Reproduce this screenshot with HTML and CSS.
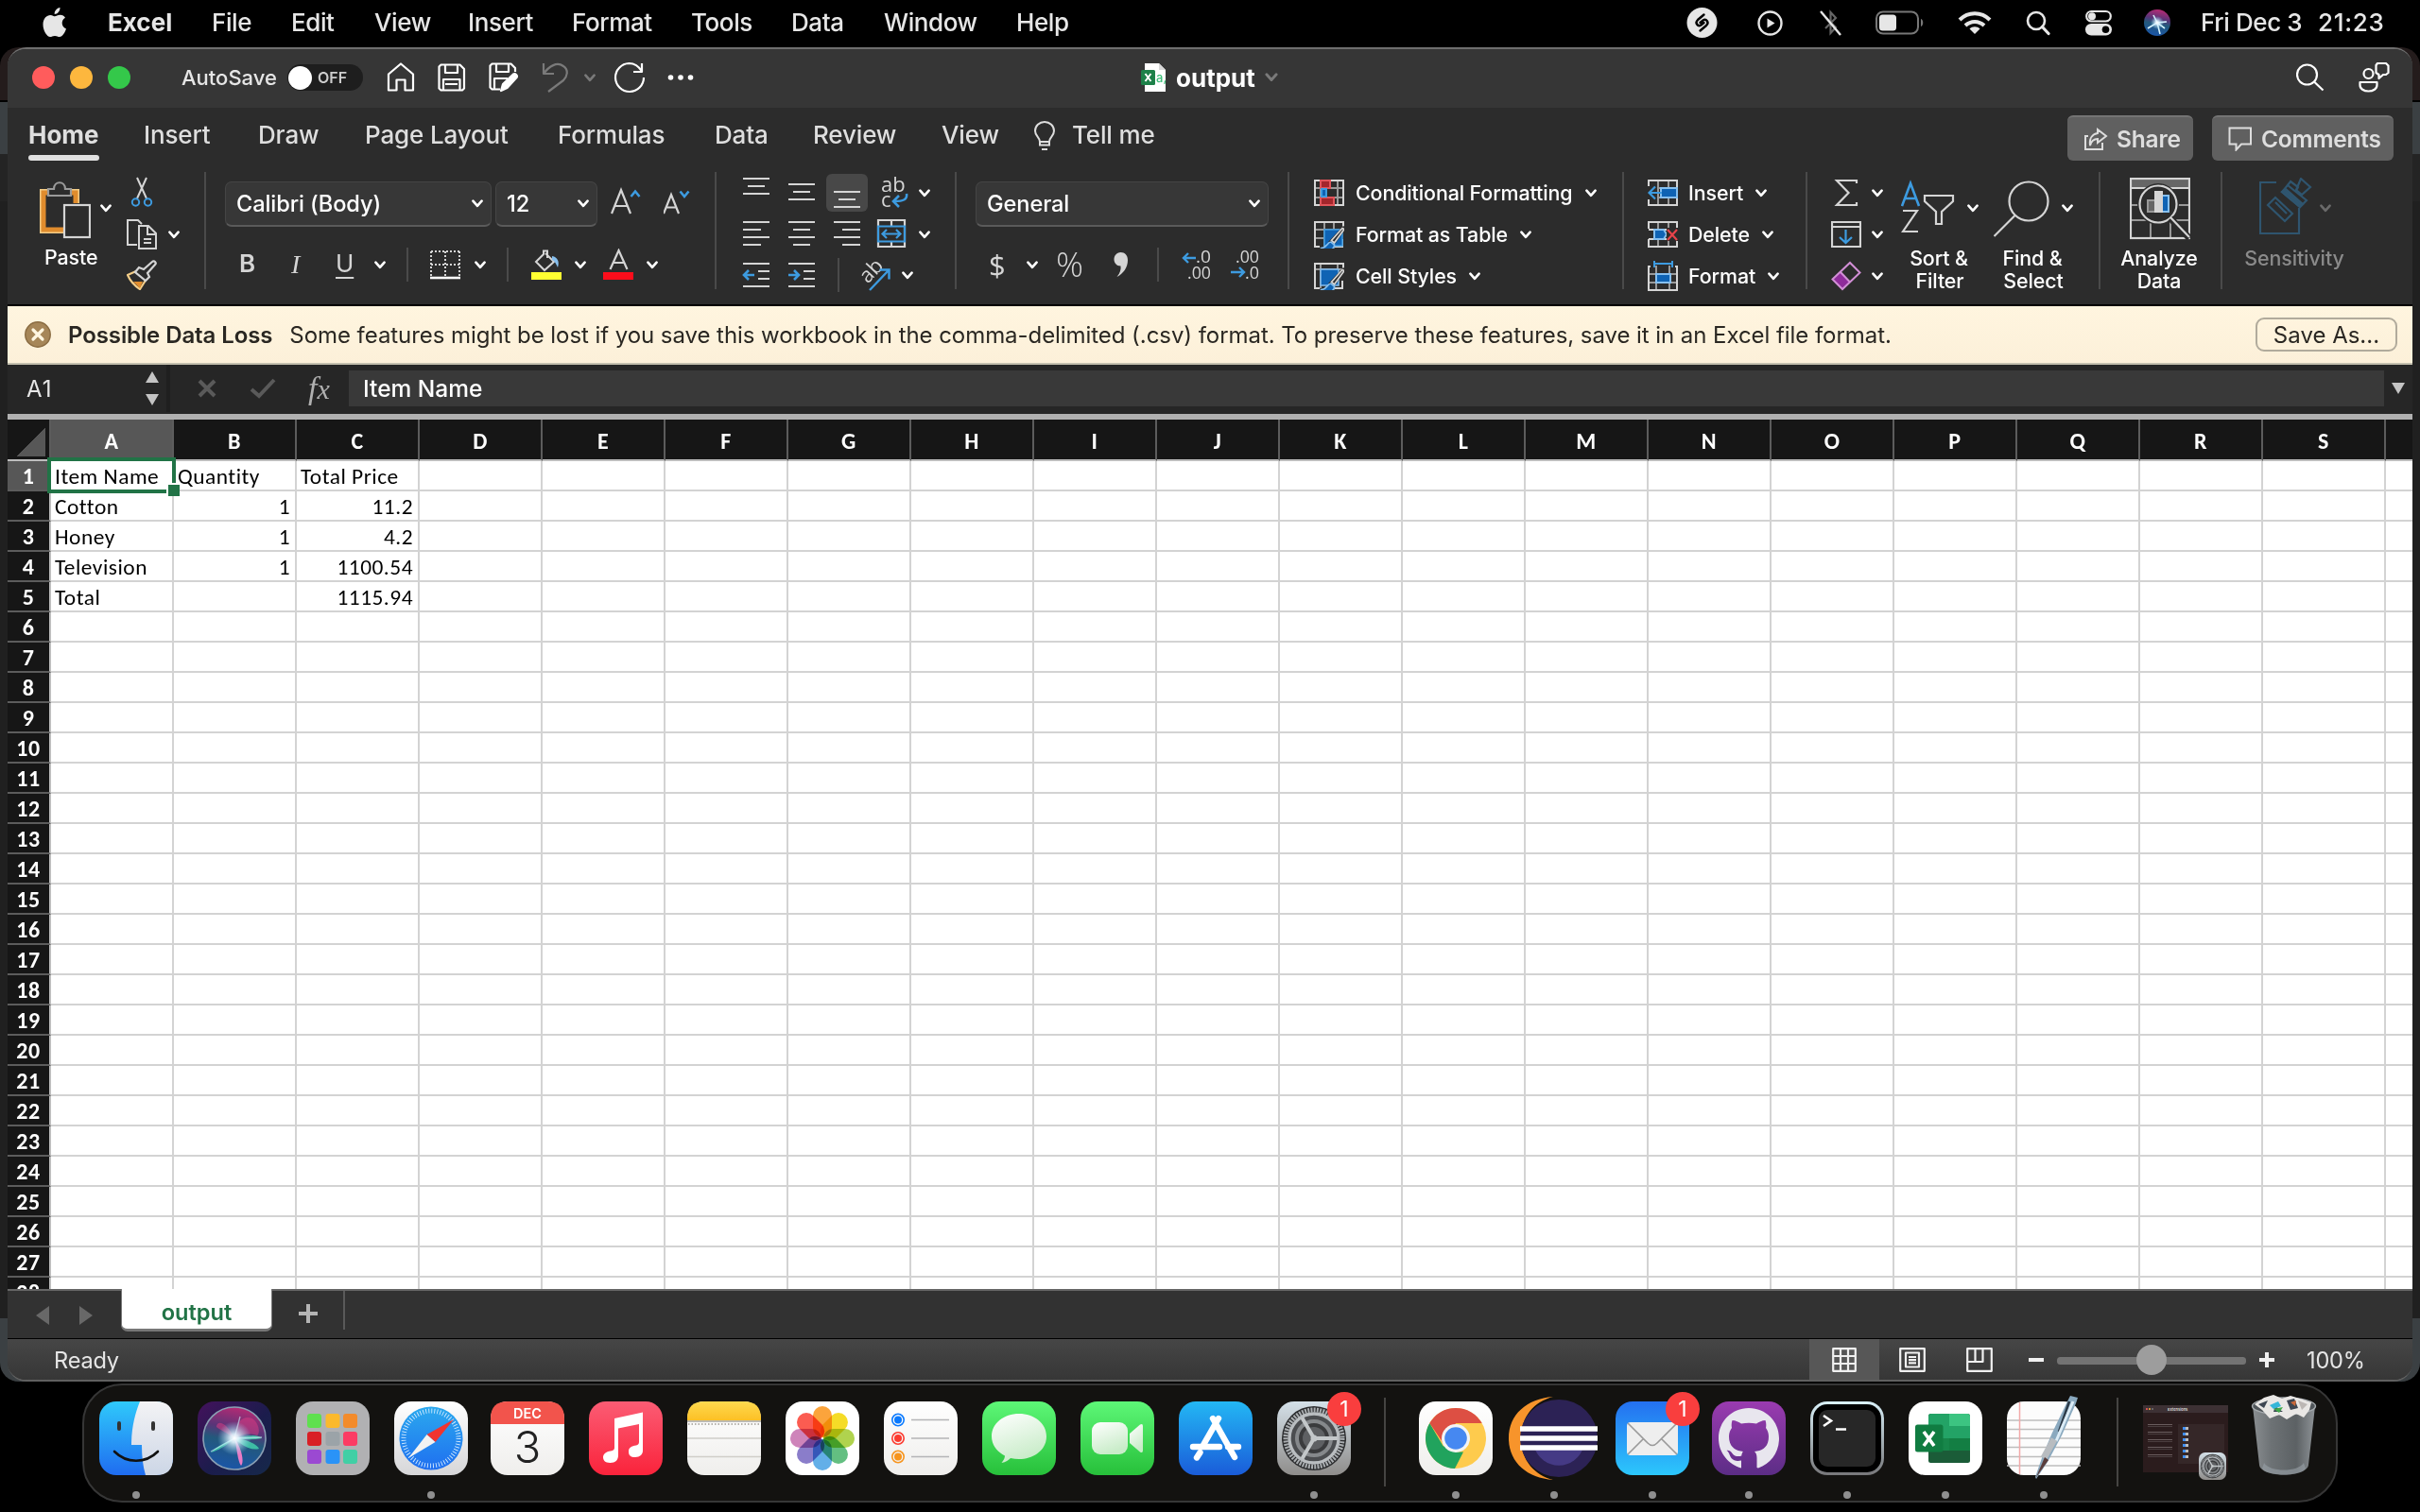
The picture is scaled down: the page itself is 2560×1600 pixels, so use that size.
FILE: index.html
```html
<!DOCTYPE html>
<html lang="en">
<head>
<meta charset="utf-8">
<title>output</title>
<link rel="stylesheet" href="styles.css">
</head>
<body>
<svg class="defs" width="0" height="0">
  <defs>
    <symbol id="chev" viewBox="0 0 12 9"><path d="M1.4 1.6 6 6.8 10.6 1.6" fill="none" stroke="currentColor" stroke-width="2.6" stroke-linecap="round" stroke-linejoin="round"/></symbol>
    <symbol id="gear" viewBox="0 0 78 78">
      <rect width="78" height="78" rx="18" fill="url(#gGear)"/>
      <circle cx="39" cy="39" r="34" fill="#2b2c2e"/>
      <circle cx="39" cy="39" r="30" fill="none" stroke="#a9adb0" stroke-width="5" stroke-dasharray="2 1.2"/>
      <circle cx="39" cy="39" r="26" fill="#4b4d50" stroke="#b9bdc0" stroke-width="3.4"/>
      <circle cx="39" cy="39" r="18" fill="#3a3b3d" stroke="#85888b" stroke-width="4"/>
      <circle cx="39" cy="39" r="12" fill="#5e6063"/>
      <path d="M39 39H64M39 39 26.500 17.500M39 39 26.500 60.500" stroke="#c3c7c9" stroke-width="4"/>
      <circle cx="39" cy="39" r="3.500" fill="#c3c7c9"/>
    </symbol>
    <symbol id="brush" viewBox="0 0 26 26"><path d="M25 0 28 2 17 18 11 21 9 17Z" fill="#2c2c2c"/><path d="M24 2.500 26 3.500 15.500 18 12.500 15.500Z" fill="#2c2c2c" stroke="#d5d5d5" stroke-width="1.700"/><path d="M12 17C8 17 8 23 2 23.500 7 28 16 26 15.500 20Z" fill="#0f63b4" stroke="#86bfee" stroke-width="1.700"/></symbol>
    <linearGradient id="gGear" x2="0" y2="1"><stop stop-color="#d4e0e8"/><stop offset="1" stop-color="#8f8d8b"/></linearGradient>
    <linearGradient id="gFinder" x2="0" y2="1"><stop stop-color="#2fc9fb"/><stop offset="1" stop-color="#1f6cf0"/></linearGradient>
    <linearGradient id="gFace" x2="0" y2="1"><stop stop-color="#f3f3f5"/><stop offset="1" stop-color="#ccd6e6"/></linearGradient>
    <radialGradient id="gGlow"><stop stop-color="#fff"/><stop offset=".25" stop-color="#e4f6ff" stop-opacity=".9"/><stop offset="1" stop-color="#8fd0f0" stop-opacity="0"/></radialGradient>
    <linearGradient id="gSiriBg" x2="1" y2="1"><stop stop-color="#43125c"/><stop offset=".55" stop-color="#1b1c4c"/><stop offset="1" stop-color="#16294a"/></linearGradient>
    <linearGradient id="gOrb" x1=".6" x2=".4" y2="1"><stop stop-color="#b82a74"/><stop offset=".35" stop-color="#5a3478"/><stop offset=".55" stop-color="#23597c"/><stop offset="1" stop-color="#1a55a8"/></linearGradient>
    <linearGradient id="gSafari" x2="0" y2="1"><stop stop-color="#fff"/><stop offset="1" stop-color="#d6d6d8"/></linearGradient>
    <linearGradient id="gBlue" x2="0" y2="1"><stop stop-color="#2ba9ee"/><stop offset="1" stop-color="#1f6ff0"/></linearGradient>
    <linearGradient id="gMusic" x2="0" y2="1"><stop stop-color="#fb5c74"/><stop offset="1" stop-color="#fa233b"/></linearGradient>
    <linearGradient id="gGreen" x2="0" y2="1"><stop stop-color="#5df777"/><stop offset="1" stop-color="#27c03a"/></linearGradient>
    <linearGradient id="gWhite" x2="0" y2="1"><stop stop-color="#fff"/><stop offset="1" stop-color="#efeeec"/></linearGradient>
    <linearGradient id="gBubble" x2=".4" y2="1"><stop stop-color="#fff"/><stop offset="1" stop-color="#c9ecc9"/></linearGradient>
    <linearGradient id="gStore" x2="0" y2="1"><stop stop-color="#23b7f4"/><stop offset="1" stop-color="#1a5cd9"/></linearGradient>
    <linearGradient id="gMail" x2="0" y2="1"><stop stop-color="#2470f0"/><stop offset="1" stop-color="#2cc7fc"/></linearGradient>
    <linearGradient id="gHub" x2="0" y2="1"><stop stop-color="#9a3bb0"/><stop offset="1" stop-color="#5c2d86"/></linearGradient>
    <linearGradient id="gTerm" x2="0" y2="1"><stop stop-color="#d8f0f8"/><stop offset="1" stop-color="#77777a"/></linearGradient>
    <linearGradient id="gBin" x2="1"><stop stop-color="#8a8e91"/><stop offset=".3" stop-color="#6d7275"/><stop offset=".7" stop-color="#5c6164"/><stop offset="1" stop-color="#8f9498"/></linearGradient>
    <linearGradient id="gYellow" x2="0" y2="1"><stop stop-color="#fed94f"/><stop offset="1" stop-color="#fcc025"/></linearGradient>
  </defs>
</svg>

<header class="menubar">
  <svg width="28" height="34" viewBox="0 0 28 34" fill="#e6e6e6"><path d="M19.500 1C19.700 4.500 17 8 13.700 8 13.300 4.800 16.300 1.300 19.500 1ZM14 10.300C15.300 10.300 17 8.700 19.600 8.700 22 8.700 24 10 25 11.700 20 14.500 21 21.500 26 23.500 25 27 22 32 19 32 17.200 32 16.400 30.900 14 30.900 11.600 30.900 10.700 32 9 32 5.800 32 1.500 25.500 1.500 19 1.500 12.500 5.500 8.900 9.300 8.900 11.500 8.900 13 10.300 14 10.300Z"/></svg>
  <b>Excel</b><span>File</span><span>Edit</span><span>View</span><span>Insert</span><span>Format</span><span>Tools</span><span>Data</span><span>Window</span><span>Help</span>
  <svg width="33" height="34" viewBox="0 0 33 34"><circle cx="16.500" cy="17" r="16" fill="#e6e6e6"/><path d="M18.500 8.500 12 14C8.500 17.500 12 21.500 15.500 19.500L18.500 17M14.500 25.500 21 20C24.500 16.500 21 12.500 17.500 14.500L14.500 17" fill="none" stroke="#000" stroke-width="2.400" stroke-linecap="round"/></svg>
  <svg width="28" height="28" viewBox="0 0 28 28"><circle cx="13.500" cy="14.500" r="12" fill="none" stroke="#e6e6e6" stroke-width="2.400"/><path d="M10.500 9.500V19.500L18.500 14.500Z" fill="#e6e6e6"/></svg>
  <svg width="24" height="30" viewBox="0 0 24 30"><path d="M6 9 17 20 11.500 26V4L17 10 6 21" fill="none" stroke="#666" stroke-width="2.200"/><path d="M1 3 22 28" stroke="#e6e6e6" stroke-width="2.400"/></svg>
  <svg width="52" height="26" viewBox="0 0 52 26"><rect x="1" y="1.500" width="44" height="23" rx="7" fill="none" stroke="#777" stroke-width="2"/><rect x="4" y="4.500" width="18" height="17" rx="3.500" fill="#e6e6e6"/><path d="M48 9C51 10 51 16 48 17Z" fill="#777"/></svg>
  <svg width="36" height="28" viewBox="0 0 36 28" fill="none" stroke="#e6e6e6" stroke-width="4"><path d="M2 11C11 2 25 2 34 11M8 17C14 11.500 22 11.500 28 17"/><path d="M18 26 12.500 20.500C15.500 17.500 20.500 17.500 23.500 20.500Z" fill="#e6e6e6" stroke="none"/></svg>
  <svg width="26" height="28" viewBox="0 0 26 28" fill="none" stroke="#e6e6e6" stroke-width="2.600"><circle cx="11" cy="12" r="9"/><path d="M17.500 18.500 24 25.500" stroke-width="3.200" stroke-linecap="round"/></svg>
  <svg width="28" height="28" viewBox="0 0 28 28"><rect x="1.200" y="2" width="25.600" height="10.500" rx="5.200" fill="none" stroke="#e6e6e6" stroke-width="2.200"/><circle cx="7" cy="7.200" r="4" fill="#e6e6e6"/><rect y="15" width="28" height="12.500" rx="6.200" fill="#e6e6e6"/><circle cx="21.500" cy="21.200" r="3.800" fill="#000"/></svg>
  <svg width="28" height="28" viewBox="0 0 28 28"><circle cx="14" cy="14" r="14" fill="url(#gOrb)"/><path d="M14 14 4 20M14 14 17 26M14 14 24 13M14 14 10 6M14 14 22 20" stroke="#d8f6ff" stroke-width="1.600"/><circle cx="14" cy="14" r="7" fill="url(#gGlow)"/></svg>
  <span>Fri Dec 3</span><span class="clock">21:23</span>
</header>

<main class="desktop">
<section class="window">
  <div class="titlebar">
    <div class="lights"><i></i><i></i><i></i></div>
    <span class="autosave">AutoSave</span>
    <div class="toggle"><i></i><span>OFF</span></div>
    <svg width="30" height="32" viewBox="0 0 30 32" class="ln"><path d="M2 12.500 15 1.500 28 12.500V29.500H19.500V18.500H10.500V29.500H2Z"/></svg>
    <svg width="30" height="30" viewBox="0 0 30 30" class="ln"><path d="M3.500 1.500H23.500L28 6V26.500L26 28.500H3.500L1.500 26.500V3.500ZM8 1.500V10H21V1.500M6 28.500V17H23.500V28.500M8 22H21"/></svg>
    <svg width="32" height="32" viewBox="0 0 32 32" class="ln"><path d="M12 28.500H3.500L1.500 26.500V3.500L3.500 1.500H23.500L28 6V10M8 1.500V10H21V1.500M6 28.500V17H20"/><path d="M13 30 15 23 26 12.500C28 11 31 14 29.500 16L19.500 27Z" fill="#fff"/></svg>
    <svg width="30" height="34" viewBox="0 0 30 34" class="ln dim"><path d="M2 2V13H13M2 13C8 5 16 0 23 5 29 9 27 16 23 20L7 32"/></svg>
    <svg class="chev dim"><use href="#chev"/></svg>
    <svg width="34" height="34" viewBox="0 0 34 34" class="ln"><path d="M30 2V11H21M30 10.500C26 4 21 2 16.500 2A15 15 0 1 0 32 17"/></svg>
    <svg width="28" height="8" viewBox="0 0 28 8" fill="#fff"><circle cx="3.500" cy="4" r="2.800"/><circle cx="14" cy="4" r="2.800"/><circle cx="24.500" cy="4" r="2.800"/></svg>
    <svg width="27" height="30" viewBox="0 0 27 30"><path d="M4 0H19L26 7V30H4Z" fill="#fff"/><path d="M19 0V7H26Z" fill="#d8d8d8"/><rect y="7" width="15" height="16" rx="1.500" fill="#1d8149"/><path d="M4.500 11 10.500 19M10.500 11 4.500 19" stroke="#fff" stroke-width="2"/><text x="16" y="20" font-size="13" fill="#3fbf7a">a,</text></svg>
    <b>output</b>
    <svg class="chev wide dim"><use href="#chev"/></svg>
    <svg width="30" height="30" viewBox="0 0 30 30" class="ln"><circle cx="11.500" cy="12" r="10.500"/><path d="M19 19.500 28.500 28.500"/></svg>
    <svg width="34" height="34" viewBox="0 0 34 34" class="ln"><circle cx="10.500" cy="13" r="5"/><path d="M1.500 22H19.500V25C19.500 29 15.500 31.500 10.500 31.500S1.500 29 1.500 25ZM20 2H29L31.500 4.500V12L29 14H26L21.500 18V14L18.500 12V4Z"/></svg>
  </div>

  <nav class="tabs">
    <b class="active">Home</b><span>Insert</span><span>Draw</span><span>Page Layout</span><span>Formulas</span><span>Data</span><span>Review</span><span>View</span>
    <svg width="22" height="32" viewBox="0 0 22 32" fill="none" stroke="#ddd" stroke-width="2"><path d="M6 22C6 17 1 16 1 10.500A10 9.500 0 0 1 21 10.500C21 16 16 17 16 22V25.500H6ZM6 22H16M8 30H14"/></svg>
    <span>Tell me</span>
    <button class="btn share"><svg width="26" height="26" viewBox="0 0 26 26" fill="none" stroke="#ddd" stroke-width="2"><path d="M5 10H2V24H20V17M15 3 24 10 15 17V13C10 13 8 16 7 20 6 13 9 8 15 7Z"/></svg>Share</button>
    <button class="btn comments"><svg width="26" height="26" viewBox="0 0 26 26" fill="none" stroke="#ddd" stroke-width="2"><path d="M1.500 1.500H24V18.500H14L8.500 24.500V18.500H1.500Z"/></svg>Comments</button>
  </nav>

  <div class="ribbon">
    <div class="group clipboard">
      <div class="paste">
        <svg width="54" height="62" viewBox="0 0 54 62"><path d="M26 54H1V9H41V23" fill="none" stroke="#f3cd88" stroke-width="2"/><path d="M26 51H4V12H38V23" fill="none" stroke="#e08c2d" stroke-width="5"/><path d="M9 8H15C15 -1 27 -1 27 8H33V15H9Z" fill="#2c2c2c" stroke="#9a9a9a" stroke-width="2.200"/><rect x="26" y="25" width="27" height="34" fill="#2c2c2c" stroke="#d5d5d5" stroke-width="2.200"/></svg>
        <svg class="chev"><use href="#chev"/></svg>
        <span>Paste</span>
      </div>
      <div class="clips">
        <svg width="32" height="36" viewBox="0 0 32 36" fill="none" stroke-width="2"><path d="M11 2 21 24M21 2 11 24" stroke="#d5d5d5"/><g stroke="#3d9be0"><circle cx="9.500" cy="28" r="3.700"/><circle cx="22.500" cy="28" r="3.700"/></g></svg><i></i>
        <svg width="34" height="34" viewBox="0 0 34 34" fill="none" stroke="#d5d5d5" stroke-width="2"><path d="M11 28H1V2H12L16 6M13 8H23L31 16V32H13ZM22 8V17H31M18 22H26M18 26H26"/></svg><svg class="chev"><use href="#chev"/></svg>
        <svg class="painter" width="32" height="32" viewBox="0 0 32 32" stroke-width="2.200"><path d="M1 16 12 11 21 20 14 31C8 27 4 23 1 16Z" fill="#2c2c2c" stroke="#f3cd88"/><path d="M7 23 17 23 14 30Z" fill="#e08c2d"/><path d="M9 13 13 8 18 10 27 2C29 0 32 3 30 5L22 14 24 18 20 22Z" fill="#2c2c2c" stroke="#d5d5d5"/></svg><i></i>
      </div>
    </div>

    <div class="group font">
      <div class="font-top">
        <div class="select">Calibri (Body)<svg class="chev"><use href="#chev"/></svg></div>
        <div class="select">12<svg class="chev"><use href="#chev"/></svg></div>
        <svg width="34" height="40" viewBox="0 0 34 40" fill="none" stroke="#d5d5d5" stroke-width="2.200"><path d="M1 34 11 9 21 34M4.500 26H17.500"/><path d="M21.500 16 26 10.500 30.500 16" stroke="#3d9be0" stroke-width="2.600"/></svg>
        <svg width="30" height="40" viewBox="0 0 30 40" fill="none" stroke="#d5d5d5" stroke-width="2.200"><path d="M0 34 8 14 16 34M3 27.500H13"/><path d="M17.500 10.500 22 16 26.500 10.500" stroke="#3d9be0" stroke-width="2.600"/></svg>
      </div>
      <div class="font-bottom">
        <b class="glyph bold">B</b><i class="glyph ital">I</i><u class="glyph und">U</u><svg class="chev"><use href="#chev"/></svg><i class="vr"></i>
        <svg width="32" height="32" viewBox="0 0 32 32" fill="none" stroke="#d5d5d5" stroke-width="2"><path d="M1 2H31M1 16H31M1 2V29M16 2V29M31 2V29" stroke-dasharray="2 2"/><path d="M0 30H32" stroke="#fff" stroke-width="2.600"/></svg>
        <svg class="chev"><use href="#chev"/></svg><i class="vr"></i>
        <svg width="32" height="34" viewBox="0 0 32 34"><path d="M15 5 24 14 14 23 5 14 13 6V2.500H17V10" fill="none" stroke="#d5d5d5" stroke-width="2"/><path d="M22 8C28 9 30 14 28 20 26 16 25 13 22 12Z" fill="#86bfee"/><rect y="25" width="32" height="8" fill="#ffff32"/></svg>
        <svg class="chev"><use href="#chev"/></svg>
        <svg width="32" height="34" viewBox="0 0 32 34"><path d="M7.500 22 16.500 2 25.500 22M11 15H22" fill="none" stroke="#d5d5d5" stroke-width="2.200"/><rect y="25" width="32" height="8" fill="#fc0d1b"/></svg>
        <svg class="chev"><use href="#chev"/></svg>
      </div>
    </div>

    <div class="group align">
      <div class="align-1">
        <svg width="28" height="40" viewBox="0 0 28 40" class="bars"><path d="M0 5H28M5 13H23M0 21H28"/></svg>
        <svg width="28" height="40" viewBox="0 0 28 40" class="bars"><path d="M0 11H28M5 19H23M0 27H28"/></svg>
        <svg width="44" height="40" viewBox="0 0 44 40" class="bars on"><path d="M8 19H36M13 27H31M8 35H36"/></svg>
        <svg width="30" height="40" viewBox="0 0 30 40"><text x="0" y="19" font-size="22">ab</text><text x="0" y="35" font-size="22">c</text><path d="M27 21C28 27 24 29 14 29M19 23 13 29 19 35" fill="none" stroke="#3d9be0" stroke-width="2.600"/></svg>
        <svg class="chev"><use href="#chev"/></svg>
      </div>
      <div class="align-2">
        <svg width="28" height="40" viewBox="0 0 28 40" class="bars"><path d="M0 7H28M0 15H19M0 23H28M0 31H19"/></svg>
        <svg width="28" height="40" viewBox="0 0 28 40" class="bars"><path d="M0 7H28M5 15H23M0 23H28M5 31H23"/></svg>
        <svg width="28" height="40" viewBox="0 0 28 40" class="bars"><path d="M0 7H28M9 15H28M0 23H28M9 31H28"/></svg>
        <svg width="32" height="40" viewBox="0 0 32 40" fill="none" stroke-width="2.200"><path d="M1 5H29V33H1ZM15 5V11M15 28V33" stroke="#d5d5d5"/><path d="M1 11.500H29V27.500H1ZM6 19.500H24M10 15 5.500 19.500 10 24M20 15 24.500 19.500 20 24" stroke="#3d9be0"/></svg>
        <svg class="chev"><use href="#chev"/></svg>
      </div>
      <div class="align-3">
        <svg width="28" height="36" viewBox="0 0 28 36" class="bars"><path d="M0 6H28M16 14H28M16 22H28M0 30H28"/><path d="M12 18H1M6 13 1 18 6 23" class="blue"/></svg>
        <svg width="28" height="36" viewBox="0 0 28 36" class="bars"><path d="M0 6H28M16 14H28M16 22H28M0 30H28"/><path d="M0 18H11M6 13 11 18 6 23" class="blue"/></svg>
        <i class="vr"></i>
        <svg width="34" height="36" viewBox="0 0 34 36"><text x="6" y="27" font-size="22" transform="rotate(-47 8 25)">ab</text><path d="M10 34 30 13M20.500 12.500H30.500V22.500" fill="none" stroke="#3d9be0" stroke-width="2.400"/></svg>
        <svg class="chev"><use href="#chev"/></svg>
      </div>
    </div>

    <div class="group number">
      <div class="select">General<svg class="chev"><use href="#chev"/></svg></div>
      <div class="number-bottom">
        <span class="dollar">$</span><svg class="chev"><use href="#chev"/></svg><span class="percent">%</span>
        <svg width="16" height="28" viewBox="0 0 16 28"><path d="M7.500 1C12 1 15 4 15 9.500 15 17 10 24 3.500 27 7 23 8 19 7.500 15.500 3 15.500 .500 12 .500 8.500S3 1 7.500 1Z" fill="#d5d5d5"/></svg>
        <i class="vr"></i>
        <svg width="34" height="34" viewBox="0 0 34 34"><text x="15" y="15" textLength="16" lengthAdjust="spacingAndGlyphs">.0</text><text x="6" y="32" textLength="25" lengthAdjust="spacingAndGlyphs">.00</text><path d="M15 10H2M7 5 2 10 7 15" fill="none" stroke="#3d9be0" stroke-width="2.400"/></svg>
        <svg width="34" height="34" viewBox="0 0 34 34"><text x="5" y="15" textLength="25" lengthAdjust="spacingAndGlyphs">.00</text><text x="15" y="32" textLength="15" lengthAdjust="spacingAndGlyphs">.0</text><path d="M0 25H14M9 20 14 25 9 30" fill="none" stroke="#3d9be0" stroke-width="2.400"/></svg>
      </div>
    </div>

    <div class="group styles">
      <svg width="32" height="30" viewBox="0 0 32 30"><path d="M7 2V28M25 2V28M2 10H30M2 20H30" stroke="#999" stroke-width="2"/><rect x="1" y="2" width="30" height="26" fill="none" stroke="#d5d5d5" stroke-width="2"/><g stroke-width="2"><path d="M7 2H17V10H7ZM7 20H21V28H7Z" fill="#a4262c" stroke="#e0545a"/><path d="M8 11H13V19H8Z" fill="#0f63b4" stroke="#3d9be0"/></g></svg>
      <span>Conditional Formatting<svg class="chev"><use href="#chev"/></svg></span>
      <svg width="32" height="30" viewBox="0 0 32 30"><path d="M11 2V28M21 2V28M2 10H30M2 19H30" stroke="#999" stroke-width="2"/><path d="M31 8V2H1V28H6M30 20V28H22" fill="none" stroke="#d5d5d5" stroke-width="2"/><path d="M11 10H30V27H11Z" fill="#0f63b4" stroke="#3d9be0" stroke-width="1.500"/><use href="#brush" x="6" y="6" width="26" height="26"/></svg>
      <span>Format as Table<svg class="chev"><use href="#chev"/></svg></span>
      <svg width="32" height="30" viewBox="0 0 32 30"><path d="M7 2V28M2 8H30M25 2V8" stroke="#999" stroke-width="2"/><path d="M31 8V2H1V28H6M30 20V28H22" fill="none" stroke="#d5d5d5" stroke-width="2"/><path d="M7 8H26V25H7Z" fill="#0f63b4" stroke="#86bfee" stroke-width="1.500"/><use href="#brush" x="6" y="6" width="26" height="26"/></svg>
      <span>Cell Styles<svg class="chev"><use href="#chev"/></svg></span>
    </div>

    <div class="group cells">
      <svg width="32" height="30" viewBox="0 0 32 30"><path d="M11 2V28M22 2V28M2 10H30M2 20H30" stroke="#999" stroke-width="2"/><path d="M1 8V2H31V28H1V22" fill="none" stroke="#d5d5d5" stroke-width="2"/><path d="M14 10H31V20H14Z" fill="#0f63b4" stroke="#86bfee" stroke-width="2"/><path d="M0 9H10V21H0Z" fill="#2c2c2c"/><path d="M15 15H2M8 8.500 1.500 15 8 21.500" fill="none" stroke="#3d9be0" stroke-width="2.200"/></svg>
      <span>Insert<svg class="chev"><use href="#chev"/></svg></span>
      <svg width="32" height="30" viewBox="0 0 32 30"><path d="M11 2V28M22 2V28" stroke="#999" stroke-width="2"/><path d="M1 9V2H31V8M1 10H31M1 20V28H31V22M1 20H31" fill="none" stroke="#d5d5d5" stroke-width="2"/><path d="M7 10H17L20 15 17 20H7Z" fill="#0f63b4" stroke="#86bfee" stroke-width="2"/><rect x="20" y="8" width="12" height="14" fill="#2c2c2c"/><path d="M21 10 31 21M31 10 21 21" stroke="#e8434a" stroke-width="2.200"/></svg>
      <span>Delete<svg class="chev"><use href="#chev"/></svg></span>
      <svg width="32" height="34" viewBox="0 0 32 34"><path d="M9 6V32M23 6V32M2 15H30M2 24H30" stroke="#999" stroke-width="2"/><path d="M3 7H1V32H31V7H29" fill="none" stroke="#d5d5d5" stroke-width="2"/><path d="M9 15H24V24H9Z" fill="#0f63b4" stroke="#86bfee" stroke-width="2"/><path d="M7 4H26M7 1V8M26 1V8" stroke="#3d9be0" stroke-width="2"/></svg>
      <span>Format<svg class="chev"><use href="#chev"/></svg></span>
    </div>

    <div class="group editing">
      <div class="sums">
        <svg width="32" height="30" viewBox="0 0 32 30" fill="none" stroke="#d5d5d5" stroke-width="2.200"><path d="M27 5V2H6L18.500 15 6 28H27V25"/></svg><svg class="chev"><use href="#chev"/></svg>
        <svg width="32" height="30" viewBox="0 0 32 30" fill="none" stroke="#d5d5d5" stroke-width="2.200"><path d="M1 2H31V28H1ZM1 7H31"/><path d="M15.500 10V24M9 18 15.500 24 22 18" stroke="#3d9be0"/></svg><svg class="chev"><use href="#chev"/></svg>
        <svg width="32" height="32" viewBox="0 0 32 32" stroke-width="2"><path d="M1.500 19 10 12 20 22 12 30Z" fill="#8f2c9b"/><path d="M1.500 19.500 20 2 30.500 12.500 12 30ZM10 12 19.500 22" fill="none" stroke="#d28fd6"/></svg><svg class="chev"><use href="#chev"/></svg>
      </div>
      <div class="big">
        <div><svg width="58" height="64" viewBox="0 0 58 64" fill="none" stroke="#d5d5d5" stroke-width="2.200"><path d="M1 30 10 6 19 30M4 22H16" stroke="#3d9be0" stroke-width="2.600"/><path d="M2 35H17L2 57H18M25 19H55V25L43 36V49H37V36L25 25Z"/></svg><svg class="chev"><use href="#chev"/></svg></div>
        <span>Sort &amp;<br>Filter</span>
      </div>
      <div class="big find">
        <div><svg width="60" height="64" viewBox="0 0 60 64" fill="none" stroke="#d5d5d5" stroke-width="2.200"><circle cx="37" cy="25" r="20.500"/><path d="M22.500 40 .500 62"/></svg><svg class="chev"><use href="#chev"/></svg></div>
        <span>Find &amp;<br>Select</span>
      </div>
    </div>

    <div class="group analyze">
      <div class="big">
        <div><svg width="64" height="66" viewBox="0 0 64 66"><path d="M2 2H62V10H2Z" fill="#666"/><path d="M1 11H63" stroke="#d5d5d5" stroke-width="2"/><path d="M1 29H63M1 45H63M22 45V64M43 45V64" stroke="#999" stroke-width="2"/><rect x="1" y="1" width="62" height="63" fill="none" stroke="#d5d5d5" stroke-width="2.200"/><circle cx="30" cy="28" r="22" fill="#2c2c2c"/><circle cx="30" cy="28" r="19.500" fill="#2c2c2c" stroke="#d5d5d5" stroke-width="2.200"/><path d="M43 43 63 64" stroke="#2c2c2c" stroke-width="7"/><path d="M43 42 63 63" stroke="#d5d5d5" stroke-width="2.200"/><rect x="19" y="24" width="8" height="12" fill="#666" stroke="#999" stroke-width="2"/><rect x="34" y="19" width="7" height="17" fill="#0f63b4" stroke="#86bfee" stroke-width="2"/><rect x="26" y="14" width="9" height="23" fill="#d5d5d5"/></svg></div>
        <span>Analyze<br>Data</span>
      </div>
    </div>

    <div class="group sensitivity">
      <div class="big">
        <div><svg width="56" height="62" viewBox="0 0 56 62" fill="none" stroke="#2f556f" stroke-width="2.200"><path d="M18 5H1V59H42V32"/><path d="M33 4 41 10 37 17 30 8ZM44 1 54 10 45 18 39 13Z" fill="#2c2c2c"/><path d="M30 8 50 24 43 31 24 15Z" fill="#2c2c2c"/><path d="M28 12 46 28 43 31 24 15Z" fill="#2f556f"/><path d="M17 21 35 38 27 46 9 29ZM17 26 29 38"/></svg><svg class="chev"><use href="#chev"/></svg></div>
        <span>Sensitivity</span>
      </div>
    </div>
  </div>

  <div class="warning">
    <svg width="28" height="28" viewBox="0 0 28 28"><circle cx="14" cy="14" r="13.200" fill="#a68658" stroke="#8a6c42" stroke-width="1.500"/><path d="M9 9 19 19M19 9 9 19" stroke="#fff6e0" stroke-width="3.200" stroke-linecap="round"/></svg>
    <b>Possible Data Loss</b>
    <span>Some features might be lost if you save this workbook in the comma-delimited (.csv) format. To preserve these features, save it in an Excel file format.</span>
    <button>Save As...</button>
  </div>

  <div class="formula">
    <span class="cellref">A1</span>
    <svg width="14" height="36" viewBox="0 0 14 36" fill="#c4c4c4"><path d="M0 12 7 0 14 12ZM0 24 7 36 14 24Z"/></svg>
    <i class="notch"></i>
    <svg width="20" height="20" viewBox="0 0 20 20"><path d="M2 2 18 18M18 2 2 18" stroke="#5a5a5a" stroke-width="4"/></svg>
    <svg width="28" height="22" viewBox="0 0 28 22"><path d="M2 12 10 19 26 2" fill="none" stroke="#5a5a5a" stroke-width="4"/></svg>
    <span class="fx"><i>f</i>x</span>
    <div class="entry">Item Name</div>
    <svg width="14" height="12" viewBox="0 0 14 12"><path d="M0 0H14L7 12Z" fill="#c4c4c4"/></svg>
  </div>

  <div class="sheet"><table id="grid"></table><i class="selection"></i></div>

  <div class="sheetbar">
    <svg width="14" height="20" viewBox="0 0 14 20"><path d="M14 0V20L0 10Z" fill="#686868"/></svg>
    <svg width="14" height="20" viewBox="0 0 14 20"><path d="M0 0V20L14 10Z" fill="#686868"/></svg>
    <div class="sheettab">output</div>
    <svg width="20" height="20" viewBox="0 0 20 20"><path d="M0 10H20M10 0V20" stroke="#b4b4b4" stroke-width="4"/></svg>
    <i></i>
  </div>

  <footer class="status">
    <span>Ready</span>
    <div class="view"><svg width="26" height="26" viewBox="0 0 26 26" class="ln"><path d="M1.200 1.200H24.800V24.800H1.200ZM9 1V25M17 1V25M1 9H25M1 17H25"/></svg></div>
    <svg width="28" height="26" viewBox="0 0 28 26" class="ln"><path d="M1.200 1.200H26.800V24.800H1.200ZM7 5.500H21V20.500H7ZM10 10H18M10 13.200H18M10 16.400H18"/></svg>
    <svg width="28" height="26" viewBox="0 0 28 26" class="ln"><path d="M1.200 1.200H26.800V24.800H1.200ZM1 15H17.500V1M9.500 1V15"/></svg>
    <svg width="16" height="16" viewBox="0 0 16 16"><path d="M0 8H16" stroke="#f0f0f0" stroke-width="4"/></svg>
    <svg width="200" height="34" viewBox="0 0 200 34"><rect y="14" width="200" height="8" rx="3.500" fill="#737373"/><circle cx="100" cy="17" r="16" fill="#9d9d9d"/></svg>
    <svg width="16" height="16" viewBox="0 0 16 16"><path d="M0 8H16M8 0V16" stroke="#f0f0f0" stroke-width="4"/></svg>
    <span>100%</span>
  </footer>
</section>
</main>

<div class="dock">
  <div class="app run"><svg viewBox="0 0 78 78"><rect width="78" height="78" rx="18" fill="url(#gFinder)"/><path d="M43 0H60Q78 0 78 18V60Q78 78 60 78H49C46 68 45 58 45 46H34C34 28 38 12 43 0Z" fill="url(#gFace)"/><path d="M21 23V29M57 23V29" stroke="#333" stroke-width="4" stroke-linecap="round"/><path d="M16 53C29 66 49 66 62 53" fill="none" stroke="#111" stroke-width="2.600" stroke-linecap="round"/></svg></div>
  <div class="app"><svg viewBox="0 0 78 78"><rect width="78" height="78" rx="18" fill="url(#gSiriBg)"/><circle cx="39" cy="39" r="33" fill="url(#gOrb)" stroke="#8aa0b4" stroke-width="1.600"/><path d="M39 39C30 20 20 20 20 27 24 30 32 34 39 39ZM39 39C40 24 46 14 58 18 66 24 66 34 63 36 54 33 46 35 39 39Z" fill="#d83c84" opacity=".55"/><path d="M39 39C55 36 62 34 68 39 58 41 48 40 39 39ZM39 39C28 44 20 48 14 54 22 52 32 46 39 39ZM39 39C48 48 58 52 65 50 62 44 50 40 39 39Z" fill="#45d6ae" opacity=".8"/><path d="M39 39C42 50 42 62 46 68 50 64 46 48 39 39Z" fill="#ea7bc4"/><path d="M39 39 14 53M39 39 68 38M39 39 45 16" stroke="#d9f4ff" stroke-width="1.300" opacity=".6"/><circle cx="39" cy="39" r="18" fill="url(#gGlow)"/></svg></div>
  <div class="app"><svg viewBox="0 0 78 78"><rect width="78" height="78" rx="18" fill="#b1b1b3"/><g><rect x="12" y="13" width="15" height="15" rx="3" fill="#5fe04f"/><rect x="31.500" y="13" width="15" height="15" rx="3" fill="#fbb92c"/><rect x="50" y="13" width="15" height="15" rx="3" fill="#f38b2b"/><rect x="12" y="32" width="15" height="15" rx="3" fill="#d91f25"/><rect x="31.500" y="32" width="15" height="15" rx="3" fill="#9ba3a8"/><rect x="50" y="32" width="15" height="15" rx="3" fill="#fc3c64"/><rect x="12" y="51" width="15" height="15" rx="3" fill="#9b49d2"/><rect x="31.500" y="51" width="15" height="15" rx="3" fill="#2a93f7"/><rect x="50" y="51" width="15" height="15" rx="3" fill="#41cfa5"/></g></svg></div>
  <div class="app run"><svg viewBox="0 0 78 78"><rect width="78" height="78" rx="18" fill="url(#gSafari)"/><circle cx="39" cy="39" r="33.500" fill="url(#gBlue)"/><circle cx="39" cy="39" r="29" fill="none" stroke="#d5ebff" stroke-width="5" stroke-dasharray=".9 2.140"/><path d="M63 19 43.500 43 34.500 35Z" fill="#f0342f"/><path d="M15 60 34.500 35 43.500 43Z" fill="#f2f2f2"/></svg></div>
  <div class="app shift"><svg viewBox="0 0 78 78"><rect width="78" height="78" rx="18" fill="url(#gWhite)"/><path d="M0 24V18Q0 0 18 0H60Q78 0 78 18V24Z" fill="#f2544c"/><text x="39" y="18" text-anchor="middle" font-size="14.500" font-weight="600" fill="#fff">DEC</text><text x="39" y="65" text-anchor="middle" font-size="47" font-weight="300" fill="#222">3</text></svg></div>
  <div class="app"><svg viewBox="0 0 78 78"><rect width="78" height="78" rx="18" fill="url(#gMusic)"/><path d="M27 18 57 11.500V52C57 56 54 59 49 59S42 57 42 53 45 47 50 46.500C52 46 53 45 53 43V24L31 28.500V57C31 62 28 65 22.500 65S15 62 15 59 18 53 23 52.500C26 52 27 51 27 49Z" fill="#fff"/></svg></div>
  <div class="app"><svg viewBox="0 0 78 78"><rect width="78" height="78" rx="18" fill="url(#gWhite)"/><path d="M0 20V18Q0 0 18 0H60Q78 0 78 18V20Z" fill="url(#gYellow)"/><path d="M0 21H78" stroke="#a9a49a" stroke-width="1.500"/><path d="M1 24H78" stroke="#b5b2ab" stroke-width="2" stroke-dasharray="1.500 2"/><path d="M0 39H78M0 58.500H78" stroke="#d0cec9" stroke-width="1.500"/></svg></div>
  <div class="app"><svg viewBox="0 0 78 78"><rect width="78" height="78" rx="18" fill="#fff"/><g class="petals" transform="translate(39 39)"><rect x="-10" y="-34" width="20" height="33" rx="10" fill="#fb9a26"/><rect x="-10" y="-34" width="20" height="33" rx="10" fill="#f4d90f" transform="rotate(45)"/><rect x="-10" y="-34" width="20" height="33" rx="10" fill="#a8cf3a" transform="rotate(90)"/><rect x="-10" y="-34" width="20" height="33" rx="10" fill="#52b873" transform="rotate(135)"/><rect x="-10" y="-34" width="20" height="33" rx="10" fill="#52a6e6" transform="rotate(180)"/><rect x="-10" y="-34" width="20" height="33" rx="10" fill="#7d6fc4" transform="rotate(225)"/><rect x="-10" y="-34" width="20" height="33" rx="10" fill="#c977b3" transform="rotate(270)"/><rect x="-10" y="-34" width="20" height="33" rx="10" fill="#fb4a3e" transform="rotate(315)"/></g></svg></div>
  <div class="app"><svg viewBox="0 0 78 78"><rect width="78" height="78" rx="18" fill="url(#gWhite)"/><path d="M29 19.500H69M29 39H69M29 58.500H69" stroke="#b5b5b7" stroke-width="1.500"/><g fill="none" stroke-width="1.600"><circle cx="15" cy="19.500" r="6.200" stroke="#0a7aff"/><circle cx="15" cy="39" r="6.200" stroke="#fc3b30"/><circle cx="15" cy="58.500" r="6.200" stroke="#f7941d"/></g><circle cx="15" cy="19.500" r="4" fill="#0a7aff"/><circle cx="15" cy="39" r="4" fill="#fc3b30"/><circle cx="15" cy="58.500" r="4" fill="#f7941d"/></svg></div>
  <div class="app"><svg viewBox="0 0 78 78"><rect width="78" height="78" rx="18" fill="url(#gGreen)"/><path d="M39 13C55 13 68 23 68 37S55 61 39 61C36 61 33 60.500 30 60 28 62 25 64.500 20.500 65 23 62 24 59.500 24 57.500 15.500 53 10 46 10 37 10 23 23 13 39 13Z" fill="url(#gBubble)"/></svg></div>
  <div class="app"><svg viewBox="0 0 78 78"><rect width="78" height="78" rx="18" fill="url(#gGreen)"/><rect x="12" y="22" width="38" height="34" rx="9" fill="url(#gBubble)"/><path d="M52 34 63 24.500Q66 23 66 26V52Q66 55 63 53.500L52 44Z" fill="url(#gBubble)"/></svg></div>
  <div class="app"><svg viewBox="0 0 78 78"><rect width="78" height="78" rx="18" fill="url(#gStore)"/><path d="M42 18 26 46M36 18 59 59M22.500 54 19 59.500M15 48H43M52 48H63" stroke="#fff" stroke-width="6.400" stroke-linecap="round"/></svg></div>
  <div class="app run"><svg viewBox="0 0 78 78"><use href="#gear"/></svg><em>1</em></div>
  <i class="split"></i>
  <div class="app run"><svg viewBox="0 0 78 78"><rect width="78" height="78" rx="18" fill="url(#gWhite)"/><circle cx="39" cy="39" r="32" fill="#fecb4d"/><path d="M66.700 23H39L27 46 11.300 23A32 32 0 0 1 66.700 23Z" fill="#dd4f43"/><path d="M11.300 23 25.500 47 39 53.500 47 53.500 38 71A32 32 0 0 1 11.300 23Z" fill="#21a35d"/><circle cx="39" cy="39" r="15" fill="#f4f4f4"/><circle cx="39" cy="39" r="11.800" fill="#4688f1"/></svg></div>
  <div class="app run"><svg viewBox="0 0 78 78" overflow="visible"><path d="M38 -5C10 -3 -9 14 -9 39S10 81 38 83C18 78 4 62 4 39S18 0 38 -5Z" fill="#f7942b"/><circle cx="44" cy="39" r="41" fill="#2c2255"/><path d="M18 48A27 27 0 0 0 70 48Z" fill="#453a85"/><path d="M3 29H85M3 39H85M3 49H85" stroke="#fff" stroke-width="5.400"/></svg></div>
  <div class="app run"><svg viewBox="0 0 78 78"><rect width="78" height="78" rx="18" fill="url(#gMail)"/><rect x="12" y="22" width="54" height="35" rx="4" fill="#eee"/><path d="M13 56 30 39M65 56 48 39M13 23 34 44Q39 49 44 44L65 23" fill="none" stroke="#9a9a9a" stroke-width="1.600"/></svg><em>1</em></div>
  <div class="app run shift"><svg viewBox="0 0 78 78"><rect width="78" height="78" rx="18" fill="url(#gHub)"/><path d="M39 7C57 7 71 21 71 39 71 54 62 66 49 70.500L47.500 70V60C47.500 56 46.500 54.500 45 53 54 52 60 48 60 37 60 33 58.500 30 57 28 57.500 26 57.500 23 56.500 20 53 20 49.500 22 47 23.500 42 22.500 36 22.500 31 23.500 28.500 22 25 20 21.500 20 20.500 23 20.500 26 21 28 19.500 30 18 33 18 37 18 48 24.500 52 33 53 32 54 31.500 55.500 31.300 57.500 28 58.500 24 58.500 21.500 55 19.500 52 17.500 51.500 15.500 52 18 53 18.500 57 20.500 60 23 63 27 63.500 31 62.500V70.500C17 66.500 7 54 7 39 7 21 21 7 39 7Z" fill="#e8e6ee"/></svg></div>
  <div class="app run"><svg viewBox="0 0 78 78"><rect width="78" height="78" rx="18" fill="url(#gTerm)"/><rect x="3" y="3" width="72" height="72" rx="15" fill="#000"/><rect x="9" y="9" width="60" height="60" rx="9" fill="#272727"/><path d="M14 15 22 20.500 14 26M27 29.500H38" fill="none" stroke="#fff" stroke-width="2.600"/></svg></div>
  <div class="app run"><svg viewBox="0 0 78 78"><rect width="78" height="78" rx="18" fill="#fff"/><rect x="21" y="13" width="44" height="52" rx="2.500" fill="#1b5c38"/><path d="M21 15.500Q21 13 23.500 13H43V39H21Z" fill="#23a366"/><path d="M43 13H62.500Q65 13 65 15.500V26H43Z" fill="#3cc481"/><path d="M43 26H65V39H43Z" fill="#23a366"/><path d="M43 39H65V52H43Z" fill="#137e43"/><path d="M21 39H43V52H21Z" fill="#17864a"/><rect x="7" y="24.500" width="29.500" height="29" rx="2.500" fill="#107c41"/><path d="M16 32 27 47M27 32 16 47" stroke="#fff" stroke-width="3.600"/></svg></div>
  <div class="app run"><svg viewBox="0 0 78 78" overflow="visible"><rect width="78" height="78" rx="18" fill="#fcfcfc"/><path d="M0 20H78M0 29.500H78M0 39H78M0 48.500H78M0 58.500H78M0 68H78" stroke="#bdbdbd" stroke-width="1.300"/><path d="M13.500 1V77" stroke="#f2a9a9" stroke-width="1.500"/><path d="M67 -6 75 -4 73 2 58 36 43 64 31 82 30 80 38 57 48 33 64 0Z" fill="#8aa9bf"/><path d="M66 0 55 32" stroke="#2c3a48" stroke-width="2.500"/><path d="M70 0 52 42" stroke="#dcecf6" stroke-width="3"/><path d="M50 40 39 60" stroke="#b8bcc0" stroke-width="7"/><path d="M40 59 30.500 81 44 62Z" fill="#5a3d3c"/></svg></div>
  <i class="split second"></i>
  <div class="thumb"><div class="tbar"><i></i><i></i><i></i><span>Extensions</span></div><div class="tcols"><div class="tleft"></div><div class="tright"><i></i><i></i><i></i><i></i><i></i><i></i></div></div><svg viewBox="0 0 78 78"><use href="#gear"/></svg></div>
  <svg class="bin" width="70" height="90" viewBox="0 0 70 90"><path d="M2 14 9 76C10 90 60 90 61 76L68 14Z" fill="url(#gBin)"/><path d="M14 74C20 84 50 84 56 74L58 80C52 89 18 89 12 80Z" fill="#9aa2a8" opacity=".6"/><ellipse cx="35" cy="14" rx="33.500" ry="9" fill="#50565a" stroke="#a4a9ad" stroke-width="1.500"/><path d="M4 12 14 5 24 2 33 6 42 3 52 6 64 10 62 18 56 26 48 22 38 28 30 23 20 27 12 18Z" fill="#e9e7e5"/><path d="M8 12 18 8 14 16ZM38 8 46 6 50 16 42 18ZM26 14 34 20 24 20Z" fill="#3d4652"/><path d="M20 13 29 9 32 14 24 17Z" fill="#35b6d8"/><path d="M24 17 34 15 30 21Z" fill="#3fa648"/><path d="M42 10 48 8 47 14Z" fill="#c9683a"/><path d="M50 8 60 12 54 18Z" fill="#bcb7b4"/></svg>
</div>
<script src="script.js"></script>
</body>
</html>
```
FILE: styles.css
```css
* { box-sizing: border-box; }
body {
  margin: 0; width: 2560px; height: 1600px; overflow: hidden; background: #000;
  color: #e6e6e6; font: 500 26px Inter, sans-serif; white-space: nowrap;
}
svg { display: block; flex: none; }
i { font-style: normal; }
button { font: inherit; color: inherit; border: 0; padding: 0; }
.defs { position: absolute; }
.chev { width: 12px; height: 9px; color: #fff; }
.chev.wide { width: 16px; height: 10px; }
.chev.dim { color: #7a7a7a; }
.ln { fill: none; stroke: #fff; stroke-width: 2.2; stroke-linejoin: round; }
.ln.dim { stroke: #7a7a7a; }
.vr { width: 2px; height: 36px; background: #4a4a4a; }

/* menu bar */
.menubar {
  display: grid; height: 50px; padding: 0 0 3px 44px; align-items: center; letter-spacing: -.4px;
  grid-template-columns: 70px 110px 84px 88px 99px 110px 126px 106px 98px 140px 709px 75px 66px 59px 87px 72px 63px 62px 60px 124px auto;
}
.menubar b { letter-spacing: 0; }
.menubar .clock { letter-spacing: .7px; }

.desktop {
  height: 1412px; padding: 0 8px;
  background: linear-gradient(#241c1c 56px, #000 56px 58px, #3b4043 58px 113px, #242424 113px 163px, #202020 163px 1345px, #3b4043 1345px);
  border-radius: 20px;
}
.window {
  height: 1412px; border-radius: 20px; overflow: hidden; background: #2c2c2c;
  display: flex; flex-direction: column; border-top: 2px solid #6e6e6e; border-bottom: 2px solid #606060;
}
.titlebar {
  display: grid; flex: none; height: 62px; padding-left: 26px; padding-bottom: 2px; align-items: center; background: #363636;
  grid-template-columns: 158px 112px 105px 54px 54px 56px 45px 31px 57px 501px 37px 93px 1092px 66px auto;
}
.titlebar b { color: #fff; }
.titlebar .ln { margin-top: 0; }
.lights { display: flex; gap: 16px; }
.lights i { width: 24px; height: 24px; border-radius: 50%; background: #ff5c5c; }
.lights i:nth-child(2) { background: #fdb73e; }
.lights i:nth-child(3) { background: #34c84a; }
.autosave { font-size: 22px; }
.toggle {
  width: 80px; height: 28px; border-radius: 14px; background: #1e1e1e; display: flex; align-items: center;
  gap: 6px; padding-left: 1px; font-size: 16px; font-weight: 600; color: #ccc;
}
.toggle i { width: 25px; height: 25px; border-radius: 50%; background: #fff; }

/* ribbon tabs */
.tabs {
  display: grid; flex: none; height: 64px; padding: 14px 0 0 22px; align-items: start; line-height: 30px; color: #dedede; letter-spacing: -.15px;
  grid-template-columns: 122px 121px 113px 204px 166px 104px 136px 98px 40px 1053px 153px auto;
}
.tabs .active { justify-self: start; letter-spacing: 0; }
.tabs .active::after { content: ""; display: block; height: 6px; border-radius: 3px; background: #e0e0e0; margin-top: 6px; }
.btn {
  display: flex; align-items: center; height: 48px; margin-top: -6px; border-radius: 6px; background: #606060;
  font-weight: 600; font-size: 24.5px; letter-spacing: -.2px; gap: 9px; padding-left: 17px; border-top: 2px solid #747474;
}
.share { width: 133px; }
.comments { width: 192px; padding-left: 17px; }

/* ribbon body */
.ribbon { display: flex; flex: none; height: 146px; padding: 4px 0 16px; font-size: 21.4px; letter-spacing: -.1px; color: #fff; border-bottom: 2px solid #000; }
.group { flex: none; border-right: 2px solid #4a4a4a; height: 124px; }
.select {
  display: flex; align-items: center; justify-content: space-between; height: 48px; border-radius: 7px; background: #373737;
  border: 1px solid #454545; border-bottom: 2px solid #5a5a5a; padding: 0 8px 0 11px; font-size: 23.6px;
}
.clipboard { width: 210px; padding-left: 34px; display: flex; }
.paste { display: grid; grid-template-columns: 64px 28px; grid-template-rows: 68px 28px; align-content: start; padding-top: 10px; }
.paste .chev { margin-top: 24px; }
.paste span { grid-column: 1 / 3; padding-left: 5px; line-height: 24px; }
.clips { display: grid; grid-template-columns: 44px 12px; grid-template-rows: 44px 44px 36px; align-items: center; }
.painter { margin-top: 5px; }
.font { width: 540px; padding: 10px 0 0 20px; }
.font-top { display: grid; grid-template-columns: 286px 122px 56px auto; }
.font-top .select:nth-child(1) { width: 282px; }
.font-top .select:nth-child(2) { width: 108px; }
.font-bottom { display: grid; align-items: center; height: 36px; margin-top: 22px; padding-left: 18px; grid-template-columns: 52px 48px 40px 34px 25px 47px 34px 26px 46px 30px 46px auto; }
.glyph { font-size: 26px; line-height: 36px; color: #d5d5d5; }
.glyph.bold { margin: -2px 0 0 -3px; font-weight: 600; }
.glyph.ital { font: italic 28px/34px "Liberation Serif", serif; }
.glyph.und { margin: -2px 0 0 -1px; font-weight: 400; text-underline-offset: 5px; }

.align { width: 254px; padding: 2px 0 0 28px; }
.align > div { display: grid; align-items: center; }
.align-1 { grid-template-columns: 48px 40px 58px 40px auto; height: 40px; }
.align-2 { grid-template-columns: 48px 48px 46px 44px auto; height: 40px; margin-top: 4px; }
.align-3 { grid-template-columns: 48px 52px 24px 44px auto; height: 36px; margin-top: 5px; }
.bars { stroke: #d5d5d5; stroke-width: 2; fill: none; }
.bars.on { background: #484848; border-radius: 6px; }
.bars .blue { stroke: #3d9be0; stroke-width: 2.6; }
.align svg, .number svg { overflow: visible; }
.align text, .number text { font-family: "Open Sans", sans-serif; font-weight: 400; fill: #d5d5d5; letter-spacing: 0; }

.number { width: 352px; padding: 10px 0 0 20px; }
.number .select { width: 310px; }
.number-bottom { display: grid; align-items: center; height: 36px; margin-top: 22px; padding-left: 15px; grid-template-columns: 39px 31px 61px 46px 26px 52px auto; color: #d5d5d5; }
.number text { font-size: 18px; }
.dollar { font: 31px/36px "Open Sans", sans-serif; margin-left: -1px; }
.percent { font: 300 36px/36px "Open Sans", sans-serif; }

.styles, .cells { display: grid; grid-template-rows: 44px 44px 44px; align-items: center; height: 124px; }
.styles { width: 354px; padding-left: 26px; grid-template-columns: 44px auto; }
.cells { width: 194px; padding-left: 25px; grid-template-columns: 43px auto; }
.styles span, .cells span { display: flex; align-items: center; gap: 13px; }

.editing { width: 310px; padding-left: 25px; display: flex; }
.sums { display: grid; grid-template-columns: 43px 31px; grid-template-rows: 44px 44px 44px; align-items: center; height: 124px; }
.big { text-align: center; padding-top: 6px; line-height: 24px; width: 82px; }
.big > div { display: flex; height: 73px; gap: 12px; }
.big .chev { margin-top: 28px; }
.big > span { margin-left: -2px; }
.big.find { margin-left: 16px; width: 84px; }
.analyze { width: 129px; padding-left: 31px; }
.analyze .big, .sensitivity .big { display: flex; flex-direction: column; align-items: center; width: 64px; }
.sensitivity { border: 0; padding-left: 40px; color: #8a8a8a; }
.sensitivity .big { width: 74px; }
.sensitivity .big > div { gap: 8px; }
.sensitivity .chev { color: #6a6a6a; }

/* save-format warning */
.warning {
  display: flex; align-items: center; flex: none; height: 62px; padding: 0 16px 0 18px; color: #2a2722; font-size: 24px; font-weight: 400;
  background: linear-gradient(#fff5df, #fcf0d9); border-bottom: 2px solid #c3bfae; letter-spacing: -.06px;
}
.warning b { font-weight: 600; margin: 0 18px 0 18px; letter-spacing: -.1px; }
.warning button { margin-left: auto; width: 150px; height: 36px; border: 2px solid #b1ab9c; border-radius: 9px; background: none; }

/* formula bar */
.formula {
  display: grid; align-items: center; flex: none; height: 58px; background: #262626; padding: 0 0 2px 20px; font-size: 24px; font-weight: 400;
  border-bottom: 6px solid #e4e4e4; border-image: linear-gradient(#a8a8a8 0 30%, #fff 30% 65%, #b0b0b0 65%) 6;
  grid-template-columns: 126px 22px 33px 55px 62px 43px 2161px auto;
}
.cellref { letter-spacing: 1px; }
.notch { width: 4px; height: 50px; background: #1f1f1f; }
.fx { font: italic 30px/36px "Liberation Serif", serif; color: #b0b0b0; }
.fx i { font-size: 34px; font-style: italic; }
.entry { width: 2153px; height: 38px; line-height: 38px; padding-left: 15px; background: #393939; color: #fff; font-size: 24.5px; font-weight: 500; }

/* grid */
.sheet { position: relative; flex: none; height: 920px; overflow: hidden; background: #fff; }
.sheet table { border-collapse: separate; border-spacing: 0; table-layout: fixed; width: 2646px; color: #000; font: 400 23.4px Carlito, Lato, sans-serif; letter-spacing: .5px; }
.sheet th, .sheet td { padding: 0; height: 32px; line-height: 28px; border: 0 solid #d3d3d3; border-width: 0 2px 2px 0; overflow: hidden; }
.sheet td { padding: 3px 5px 0 4px; line-height: 27px; }
.sheet td.num { text-align: right; }
.sheet th { background: #161616; color: #fff; font-weight: 700; border-color: #5c5c5c; }
.sheet thead th { height: 44px; border-bottom-color: #bdbdbd; line-height: 42px; font-size: 24px; padding-top: 3px; line-height: 39px; }
.sheet tbody th { padding-top: 2px; border-right-color: #bdbdbd; font-size: 24px; }
.sheet th.on { background: #575757; }
.sheet col:first-child { width: 46px; }
.sheet .corner { background: linear-gradient(to bottom right, transparent 50%, #575757 50%) 10px 9px / 30px 30px no-repeat #161616; }
.selection { position: absolute; left: 42px; top: 40px; width: 136px; height: 38px; border: 4px solid #217346; }
.selection::after { content: ""; position: absolute; right: -8px; bottom: -7px; width: 12px; height: 12px; background: #217346; border: 2px solid #fff; border-width: 2px 0 0 2px; }

/* sheet tabs, status */
.sheetbar { display: grid; flex: none; height: 53px; border-top: 2px solid #666; border-bottom: 1px solid #000; background: #323232; padding: 0 0 0 30px; grid-template-columns: 46px 44px 188px 47px auto; }
.sheetbar svg { margin-top: 14px; }
.sheetbar > svg:nth-of-type(1), .sheetbar > svg:nth-of-type(2) { margin-top: 16px; }
.sheettab { width: 160px; height: 45px; margin-top: -2px; background: #fff; color: #217346; font-size: 23.6px; font-weight: 600; text-align: center; line-height: 50px; border: 2px solid #777; border-width: 0 1px 3px; border-radius: 0 0 7px 7px; }
.sheetbar i { width: 2px; height: 41px; background: #595959; }
.status { display: grid; flex: 1; align-items: center; padding-left: 49px; background: linear-gradient(#464646, #363636); font-size: 23.6px; font-weight: 400; letter-spacing: -.2px; grid-template-columns: 1857px 95px 71px 66px 30px 214px 50px auto; }
.status .ln { stroke: #f0f0f0; }
.status .view { display: grid; place-items: center; width: 74px; height: 44px; background: #575757; }

/* dock */
.dock { display: flex; align-items: flex-start; gap: 26px; width: 2386px; height: 126px; margin: 2px 0 0 87px; padding: 17px 0 0 16px; background: #131210; border: 2px solid #363636; border-radius: 42px; }
.app { position: relative; flex: none; width: 78px; height: 105px; }
.app svg { width: 78px; height: 78px; }
.app.shift { margin-left: -2px; }
.app.run::after { content: ""; position: absolute; left: 35px; bottom: 2px; width: 8px; height: 8px; border-radius: 50%; background: #8f8f8f; }
.app em { position: absolute; right: -11px; top: -10px; width: 36px; height: 36px; border-radius: 50%; background: #f93e3e; color: #fff; font: 400 23px/36px Inter, sans-serif; text-align: center; }
.petals { isolation: isolate; }
.petals rect { mix-blend-mode: multiply; opacity: .9; }
.split { flex: none; width: 2px; height: 94px; margin: -4px 9px 0; background: #454442; }
.split.second { margin: -4px 0 0 12px; }
.thumb { position: relative; flex: none; width: 90px; height: 71px; margin-top: 4px; background: #2b1c1d; color: #ddd; font-size: 4px; font-weight: 600; }
.tbar { display: flex; gap: 1px; height: 8px; padding: 3px; align-items: center; background: #3d3134; }
.tbar i { width: 2px; height: 2px; border-radius: 50%; background: #ff5c5c; }
.tbar i:nth-child(2) { background: #fdb73e; }
.tbar i:nth-child(3) { background: #777; }
.tbar span { margin-left: 14px; }
.tcols { display: flex; gap: 6px; padding: 12px 4px 0 5px; }
.tleft { width: 26px; height: 40px; background: repeating-linear-gradient(#6a5d5e 0 1px, transparent 1px 2px, #4a3e3f 2px 3px, transparent 3px 8px); }
.tright { width: 50px; height: 42px; background: #352728; padding: 3px 5px; display: grid; gap: 3px; align-content: start; }
.tright i { width: 6px; height: 3px; background: #3f8ef5; border-right: 3px solid #bbb; }
.thumb svg { position: absolute; right: 2px; bottom: -8px; width: 29px; height: 29px; }
.bin { margin: -9px 0 0 -2px; }
```
FILE: script.js
```js
const ROWS = 28;
const COLS = 'ABCDEFGHIJKLMNOPQRST'.split('');
const data = [
  ['Item Name', 'Quantity', 'Total Price'],
  ['Cotton', 1, 11.2],
  ['Honey', 1, 4.2],
  ['Television', 1, 1100.54],
  ['Total', '', 1115.94],
];

const cell = (value = '') => `<td${typeof value === 'number' ? ' class="num"' : ''}>${value}</td>`;
let html = '<colgroup><col>' + '<col style="width:130px">'.repeat(COLS.length) + '</colgroup><thead><tr><th class="corner"></th>';
html += COLS.map((c, i) => `<th${i ? '' : ' class="on"'}>${c}</th>`).join('') + '</tr></thead><tbody>';
for (let r = 0; r < ROWS; r++) {
  html += `<tr><th${r ? '' : ' class="on"'}>${r + 1}</th>` + COLS.map((_, i) => cell((data[r] || [])[i])).join('') + '</tr>';
}
document.getElementById('grid').innerHTML = html + '</tbody>';
```
